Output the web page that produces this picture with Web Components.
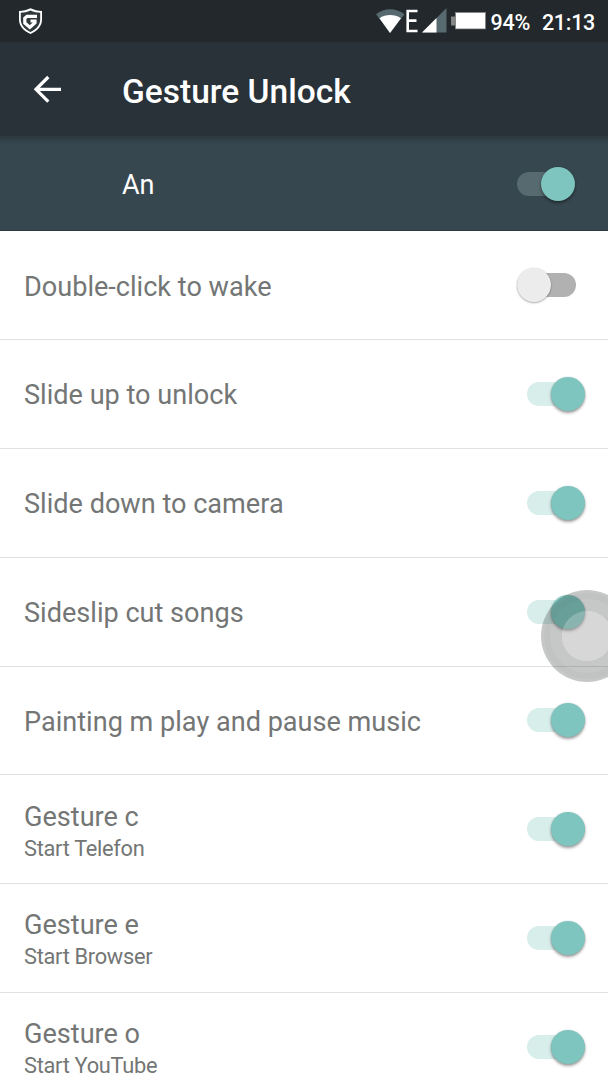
<!DOCTYPE html>
<html lang="en">
<head>
<meta charset="utf-8">
<title>Gesture Unlock</title>
<style>
html, body{
	margin: 0;
	height: 100%;
	overflow: hidden;
	background-color: #fff;
	font-family: Roboto, "Liberation Sans", sans-serif;
}
</style>
</head>
<body>

<settings-screen>
	<status-bar slot="status" battery="94%" time="21:13"></status-bar>
	<app-bar slot="bar">Gesture Unlock</app-bar>
	<master-switch slot="master">An</master-switch>

	<setting-row off inset>Double-click to wake</setting-row>
	<setting-row>Slide up to unlock</setting-row>
	<setting-row>Slide down to camera</setting-row>
	<setting-row>Sideslip cut songs</setting-row>
	<setting-row>Painting m play and pause music</setting-row>
	<setting-row>Gesture c<span slot="summary">Start Telefon</span></setting-row>
	<setting-row>Gesture e<span slot="summary">Start Browser</span></setting-row>
	<setting-row>Gesture o<span slot="summary">Start YouTube</span></setting-row>
</settings-screen>

<script>
function makeTemplate(html){
	const template = document.createElement('template');
	template.innerHTML = html;
	return template;
}

class BaseElement extends HTMLElement{
	constructor(){
		super();
		this.attachShadow({mode: 'open'});
		this.shadowRoot.appendChild(this.constructor.template.content.cloneNode(true));
	}
}

// On / off switch
class ToggleSwitch extends BaseElement{
	static template = makeTemplate(`
<style>
:host{
	display: flex;
	align-items: center;
	justify-content: flex-end;
	flex: none;
	box-sizing: border-box;
	width: 58px;
	height: 24px;
	border-radius: 12px;
	background-color: var(--track, #d8eeeb);
}
.thumb{
	flex: none;
	width: 34px;
	height: 34px;
	border-radius: 50%;
	background-color: #7dc5be;
	box-shadow: 0 2px 3px rgba(0, 0, 0, .38), 0 0 2px rgba(0, 0, 0, .12);
}
:host([off]){
	width: 59px;
	justify-content: flex-start;
	background-color: #b0b1b0;
}
:host([off]) .thumb{
	background-color: #ececec;
	box-shadow: 0 1px 2px rgba(0, 0, 0, .3), 0 0 2px rgba(0, 0, 0, .08);
}
</style>
<div class="thumb"></div>
`);
}

// Android status bar
class StatusBar extends BaseElement{
	static template = makeTemplate(`
<style>
:host{
	display: flex;
	align-items: center;
	justify-content: space-between;
	box-sizing: border-box;
	flex: none;
	height: 42px;
	padding: 0 13px 0 18px;
	background-color: #22282b;
	color: #fff;
	font-size: 21.500px;
	font-weight: 500;
	letter-spacing: -.3px;
}
svg{
	display: block;
}
.right{
	display: flex;
	align-items: center;
}
#battery{
	margin: 2px 0 0 4px;
}
#time{
	margin: 2px 0 0 12px;
}
</style>
<svg width="25" height="28" viewBox="0 0 25 28">
	<path d="M12.500 1.300C9 3 5 3.800 1 4V12.500C1 19.500 6 24 12.500 27C19 24 24 19.500 24 12.500V4C20 3.800 16 3 12.500 1.300Z" fill="#fff"/>
	<path d="M12.500 3.500C9.100 5 6 5.600 2.800 5.800V12.500C2.800 18.400 7 22.300 12.500 25C18 22.300 22.200 18.400 22.200 12.500V5.800C19 5.600 15.900 5 12.500 3.500Z" fill="#30383b"/>
	<path d="M19 9.300H9L6.800 11.300V16L11.800 20.300L17 15.800V14H12.500" fill="none" stroke="#fff" stroke-width="3.200"/>
</svg>
<div class="right">
	<svg width="112" height="42" viewBox="0 0 112 42">
		<path d="M1 14.200C9.500 7.500 20.500 7.500 29.500 14.200L15 33Z" fill="#566a6f"/>
		<path d="M4.500 18.300C10.500 14 19.500 14 26 18.300L15 33Z" fill="#fff"/>
		<path d="M42.500 11H32.700V31H42.500M32.700 20.600H41.500" fill="none" stroke="#fff" stroke-width="2.600"/>
		<path d="M71.500 8V32.500H47Z" fill="#566a6f"/>
		<path d="M61.500 18V32.500H47Z" fill="#fff"/>
		<path d="M76 16.500H80V12H111V29.300H80V25.500H76Z" fill="#858787"/>
		<rect x="81" y="13" width="29" height="15.500" fill="#fff"/>
	</svg>
	<span id="battery"></span>
	<span id="time"></span>
</div>
`);

	connectedCallback(){
		this.shadowRoot.querySelector('#battery').textContent = this.getAttribute('battery');
		this.shadowRoot.querySelector('#time').textContent = this.getAttribute('time');
	}
}

// Title bar with back arrow
class AppBar extends BaseElement{
	static template = makeTemplate(`
<style>
:host{
	display: flex;
	align-items: center;
	box-sizing: border-box;
	flex: none;
	height: 94.4px;
	padding: 4px 0 0 33px;
	background-color: #283238;
	color: #fff;
	font-size: 33.500px;
	font-weight: 500;
}
svg{
	flex: none;
	margin: -4px 60px 0 0;
}
</style>
<svg width="29" height="28" viewBox="0 0 29 28">
	<path d="M28 14.300H3M15.300 2L3 14.300L15.300 26.600" fill="none" stroke="#fff" stroke-width="3.200"/>
</svg>
<span><slot></slot></span>
`);
}

// Main switch below the title
class MasterSwitch extends BaseElement{
	static template = makeTemplate(`
<style>
:host{
	display: flex;
	align-items: center;
	justify-content: space-between;
	box-sizing: border-box;
	flex: none;
	height: 95px;
	padding: 2px 33px 0 122px;
	background: linear-gradient(#2c383e, #37474f 9px);
	border-bottom: 1px solid #2b383f;
	color: #fff;
	font-size: 27px;
	--track: #566a6f;
}
span{
	padding-top: 2px;
}
</style>
<span><slot></slot></span>
<toggle-switch></toggle-switch>
`);
}

// One line of the list, the summary is optional
class SettingRow extends BaseElement{
	static template = makeTemplate(`
<style>
:host{
	display: flex;
	align-items: center;
	justify-content: space-between;
	box-sizing: border-box;
	flex: none;
	height: 108.800px;
	padding: 0 23px 0 24px;
	border-bottom: 1px solid #e0e1e1;
	color: #737675;
}
:host([inset]){
	padding-right: 32px;
}
.text{
	padding-top: 2.500px;
}
.title{
	font-size: 27.100px;
	line-height: 36px;
}
.summary{
	font-size: 21.800px;
	line-height: 28px;
	letter-spacing: -.3px;
}
</style>
<div class="text">
	<div class="title"><slot></slot></div>
	<div class="summary"><slot name="summary"></slot></div>
</div>
<toggle-switch></toggle-switch>
`);

	connectedCallback(){
		this.shadowRoot.querySelector('toggle-switch').toggleAttribute('off', this.hasAttribute('off'));
	}
}

// Round assistive button that floats over the list
class FloatingDot extends BaseElement{
	static template = makeTemplate(`
<style>
:host{
	display: block;
	width: 92px;
	height: 92px;
}
svg{
	display: block;
}
</style>
<svg width="92" height="92" viewBox="0 0 92 92">
	<path d="M46 0A46 46 0 1 1 46 92A46 46 0 1 1 46 0ZM46 21A25 25 0 1 0 46 71A25 25 0 1 0 46 21Z" fill="#3c403e" fill-opacity=".29" fill-rule="evenodd"/>
	<circle cx="46" cy="46" r="40" fill="none" stroke="#3c403e" stroke-opacity=".03" stroke-width="6"/>
	<circle cx="46" cy="46" r="25" fill="#9a9c9b" fill-opacity=".4"/>
</svg>
`);
}

class SettingsScreen extends BaseElement{
	static template = makeTemplate(`
<style>
:host{
	display: flex;
	flex-direction: column;
	position: relative;
	height: 1080px;
	overflow: hidden;
}
main{
	display: flex;
	flex-direction: column;
	flex: none;
}
floating-dot{
	position: absolute;
	right: -25px;
	top: 590px;
}
</style>
<slot name="status"></slot>
<slot name="bar"></slot>
<slot name="master"></slot>
<main><slot></slot></main>
<floating-dot></floating-dot>
`);
}

window.customElements.define('toggle-switch', ToggleSwitch);
window.customElements.define('status-bar', StatusBar);
window.customElements.define('app-bar', AppBar);
window.customElements.define('master-switch', MasterSwitch);
window.customElements.define('setting-row', SettingRow);
window.customElements.define('floating-dot', FloatingDot);
window.customElements.define('settings-screen', SettingsScreen);
</script>
</body>
</html>
